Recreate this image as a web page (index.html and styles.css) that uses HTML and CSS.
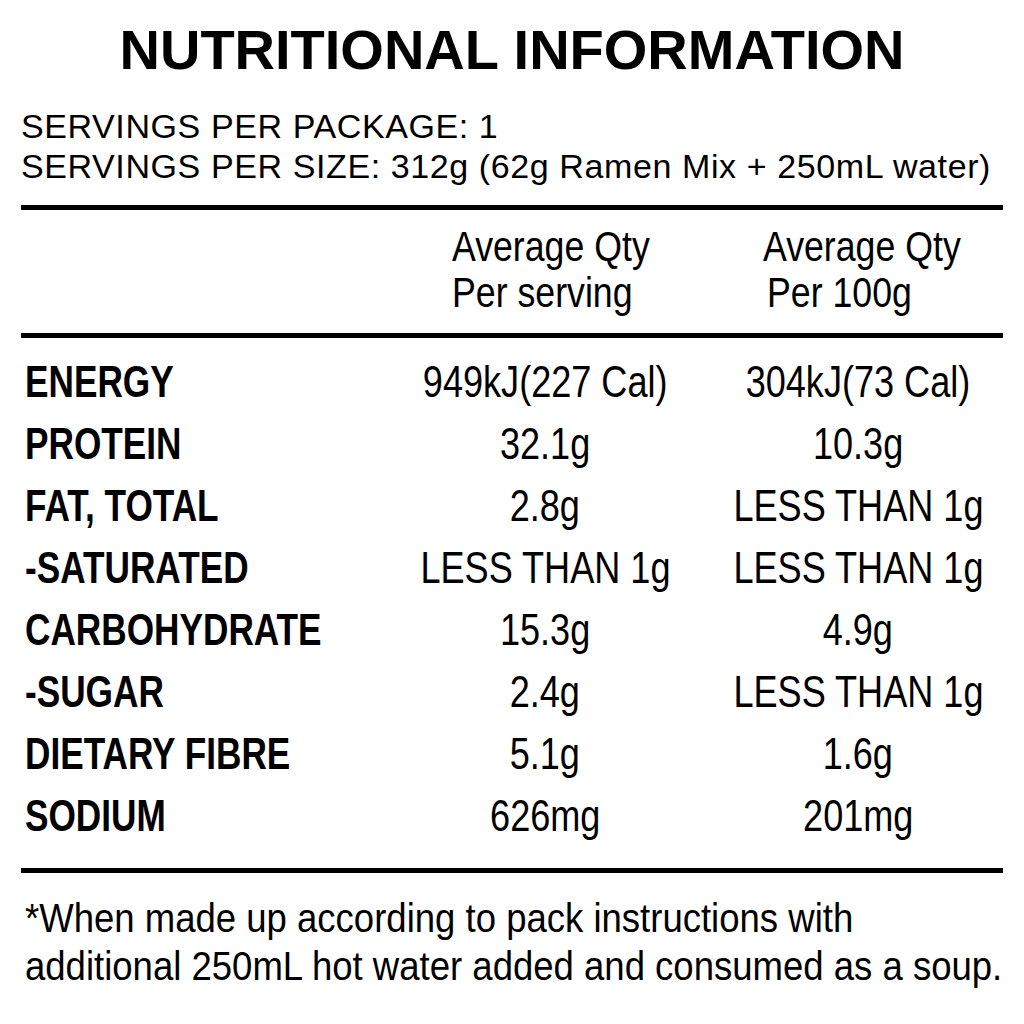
FILE: index.html
```html
<!DOCTYPE html>
<html lang="en">
<head>
<meta charset="utf-8">
<title>Nutritional Information</title>
<link rel="stylesheet" href="styles.css">
</head>
<body>
<main class="label">
  <h1 class="title">NUTRITIONAL INFORMATION</h1>
  <div class="servings">
    <p>SERVINGS PER PACKAGE: 1</p>
    <p>SERVINGS PER SIZE: 312g (62g Ramen Mix + 250mL water)</p>
  </div>
  <hr class="rule rule-top">
  <div class="head grid">
    <div></div>
    <div class="hcell c1"><span>Average Qty</span><span>Per serving</span></div>
    <div class="hcell c2"><span>Average Qty</span><span class="indent">Per 100g</span></div>
  </div>
  <hr class="rule">
  <div class="rows">
    <div class="row grid"><div class="name"><span>ENERGY</span></div><div class="val c1"><span>949kJ(227 Cal)</span></div><div class="val c2"><span>304kJ(73 Cal)</span></div></div>
    <div class="row grid"><div class="name"><span>PROTEIN</span></div><div class="val c1"><span>32.1g</span></div><div class="val c2"><span>10.3g</span></div></div>
    <div class="row grid"><div class="name"><span>FAT, TOTAL</span></div><div class="val c1"><span>2.8g</span></div><div class="val c2"><span>LESS THAN 1g</span></div></div>
    <div class="row grid"><div class="name"><span>-SATURATED</span></div><div class="val c1"><span>LESS THAN 1g</span></div><div class="val c2"><span>LESS THAN 1g</span></div></div>
    <div class="row grid"><div class="name"><span>CARBOHYDRATE</span></div><div class="val c1"><span>15.3g</span></div><div class="val c2"><span>4.9g</span></div></div>
    <div class="row grid"><div class="name"><span>-SUGAR</span></div><div class="val c1"><span>2.4g</span></div><div class="val c2"><span>LESS THAN 1g</span></div></div>
    <div class="row grid"><div class="name"><span>DIETARY FIBRE</span></div><div class="val c1"><span>5.1g</span></div><div class="val c2"><span>1.6g</span></div></div>
    <div class="row grid"><div class="name"><span>SODIUM</span></div><div class="val c1"><span>626mg</span></div><div class="val c2"><span>201mg</span></div></div>
  </div>
  <hr class="rule rule-bottom">
  <p class="note"><span>*When made up according to pack instructions with</span><span>additional 250mL hot water added and consumed as a soup.</span></p>
</main>
</body>
</html>
```
FILE: styles.css
```css
html, body {
  margin: 0;
  padding: 0;
  background: #ffffff;
  color: #000000;
}
body {
  font-family: "Liberation Sans", Arial, sans-serif;
}
.label {
  width: 982px;
  padding: 18px 21px 0 21px;
}
.title {
  margin: 0;
  font-size: 56px;
  line-height: 64px;
  font-weight: 700;
  text-align: center;
}
.servings {
  margin-top: 24px;
}
.servings p {
  margin: 0;
  font-size: 34px;
  line-height: 40px;
  letter-spacing: 0.6px;
  white-space: nowrap;
}
.rule {
  margin: 0;
  border: 0;
  height: 5px;
  background: #000;
}
.rule-top {
  margin-top: 19px;
}
.grid {
  display: grid;
  grid-template-columns: 366px 316px 300px;
}
.head {
  padding: 14px 0 17px 0;
}
.hcell {
  display: flex;
  flex-direction: column;
  align-items: flex-start;
  font-size: 42px;
  line-height: 46px;
}
.hcell span {
  display: inline-block;
  white-space: nowrap;
  transform: scaleX(0.85);
  transform-origin: left center;
}
.head .c1 {
  padding-left: 65px;
}
.head .c2 {
  padding-left: 60px;
}
.hcell .indent {
  margin-left: 4px;
}
.rows {
  padding: 13px 0 21px 0;
}
.row {
  font-size: 44px;
  line-height: 62px;
}
.name {
  font-weight: 700;
  padding-left: 4px;
}
.name span {
  display: inline-block;
  white-space: nowrap;
  transform: scaleX(0.8);
  transform-origin: left center;
}
.val {
  display: flex;
  justify-content: center;
}
.val span {
  display: inline-block;
  white-space: nowrap;
  transform: scaleX(0.82);
  transform-origin: center center;
}
.val.c2 {
  padding-left: 10px;
}
.note {
  margin: 21px 0 0 4px;
  font-size: 40px;
  line-height: 48px;
  display: flex;
  flex-direction: column;
  align-items: flex-start;
}
.note span {
  display: inline-block;
  white-space: nowrap;
  transform: scaleX(0.913);
  transform-origin: left center;
}
```
